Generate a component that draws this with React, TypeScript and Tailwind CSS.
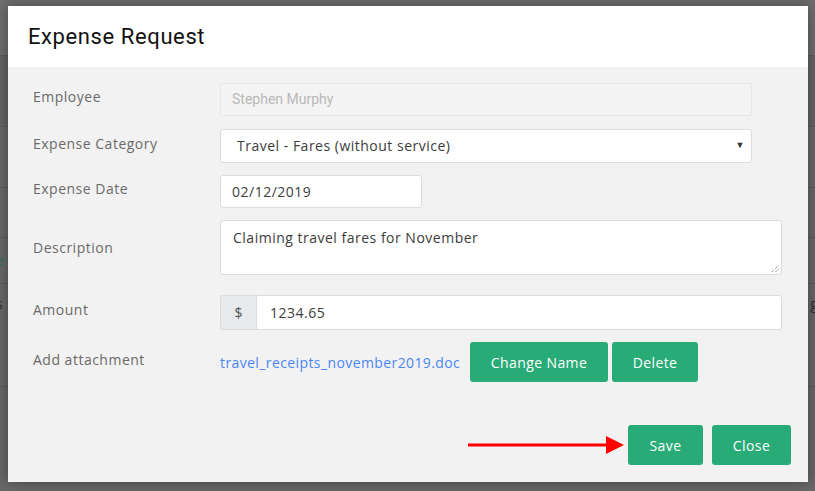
import React from 'react';

const label = "w-[187px] shrink-0 text-[14px] tracking-[0.5px] text-[#6a6a6a] font-['Open_Sans',sans-serif]";
const box = "border border-[#dcdcdc] rounded-[3px] bg-white flex items-center text-[14px] tracking-[0.5px] text-[#3c3c3c] font-['Open_Sans',sans-serif]";
const greenBtn = "h-[40px] rounded-[3px] bg-[#29ab77] text-white text-[14px] tracking-[0.4px] font-['Open_Sans',sans-serif] flex items-center justify-center";

const Backdrop = () => (
    <div className="flex flex-col h-full text-[14px] leading-[20px] font-['Open_Sans',sans-serif]">
        <div className="h-[56px] bg-[#6d6d6d] border-b border-[#5c5c5c]" />
        <div className="h-[71px] bg-[#646464] border-b border-[#5c5c5c]" />
        <div className="h-[61px] bg-[#676767] border-b border-[#5a5a5a]" />
        <div className="h-[50px] bg-[#676767] border-b border-[#5a5a5a]" />
        <div className="h-[46px] bg-[#676767] border-b border-[#5a5a5a] flex items-center">
            <span className="-ml-[4px] text-[#1f6f52]">e</span>
        </div>
        <div className="h-[103px] bg-[#676767] border-b border-[#5a5a5a] flex items-start justify-between pt-[10px] text-[#2a2a2a]">
            <span className="-ml-[4px]">s</span>
            <span className="-mr-[3px]">g</span>
        </div>
        <div className="flex-1 bg-[#676767]" />
    </div>
);

const Arrow = () => (
    <svg width="157" height="20" viewBox="0 0 157 20" className="mr-[3px]">
        <line x1="0" y1="10" x2="142" y2="10" stroke="#ff0000" strokeWidth="3" />
        <polygon points="138,1 156,10 138,19" fill="#ff0000" />
    </svg>
);

const App = () => {
    return (
        <div className="relative w-[815px] h-[491px] overflow-hidden bg-[#666]">
            <Backdrop />
            <div className="absolute left-[8px] top-[6px] w-[800px] h-[476px] flex flex-col shadow-[0_0_12px_rgba(0,0,0,0.35)]">
                <div className="h-[61px] shrink-0 bg-white flex items-center px-[20px]">
                    <h1 className="text-[22px] text-[#111] font-['Roboto',sans-serif] tracking-[0.6px]">Expense Request</h1>
                </div>
                <div className="flex-1 bg-[#f2f2f2] px-[25px] pt-[16px]">
                    <div className="flex items-center">
                        <div className={label + " -mt-[6px]"}>Employee</div>
                        <div className="w-[532px] h-[33px] border border-[#e6e6e6] rounded-[3px] bg-[#f4f4f4] flex items-center px-[11px] text-[14px] text-[#b8b8b8] font-['Roboto',sans-serif]">
                            Stephen Murphy
                        </div>
                    </div>
                    <div className="flex items-center mt-[13px]">
                        <div className={label + " -mt-[6px]"}>Expense Category</div>
                        <div className={box + " w-[532px] h-[34px] pl-[16px] pr-[6px] pb-[2px] justify-between"}>
                            <span>Travel - Fares (without service)</span>
                            <span className="text-[9px] text-[#333]">▼</span>
                        </div>
                    </div>
                    <div className="flex items-center mt-[12px]">
                        <div className={label + " -mt-[6px]"}>Expense Date</div>
                        <div className={box + " w-[202px] h-[33px] px-[11px]"}>02/12/2019</div>
                    </div>
                    <div className="flex items-center mt-[12px]">
                        <div className={label}>Description</div>
                        <div className={box + " relative w-[562px] h-[55px] px-[12px] items-start pt-[6px]"}>
                            Claiming travel fares for November
                            <svg width="8" height="8" viewBox="0 0 8 8" className="absolute right-[2px] bottom-[2px]">
                                <line x1="1" y1="8" x2="8" y2="1" stroke="#555" strokeWidth="0.8" strokeDasharray="1 1" />
                                <line x1="4.5" y1="8" x2="8" y2="4.5" stroke="#555" strokeWidth="0.8" strokeDasharray="1 1" />
                            </svg>
                        </div>
                    </div>
                    <div className="flex items-center mt-[20px]">
                        <div className={label + " -mt-[6px]"}>Amount</div>
                        <div className="flex">
                            <div className="w-[36px] h-[35px] bg-[#e8ebee] border border-[#dcdcdc] border-r-0 rounded-l-[3px] flex items-center justify-center text-[14px] text-[#555] font-['Open_Sans',sans-serif]">$</div>
                            <div className={box + " w-[526px] h-[35px] px-[13px] rounded-l-none"}>1234.65</div>
                        </div>
                    </div>
                    <div className="flex items-center mt-[12px]">
                        <div className={label + " -mt-[6px]"}>Add attachment</div>
                        <span className="w-[250px] shrink-0 text-[14px] tracking-[0.4px] text-[#4a86f5] font-['Open_Sans',sans-serif]">travel_receipts_november2019.doc</span>
                        <div className={greenBtn + " w-[138px]"}>Change Name</div>
                        <div className={greenBtn + " w-[86px] ml-[4px]"}>Delete</div>
                    </div>
                    <div className="flex items-center justify-end mt-[43px] -mr-[8px]">
                        <Arrow />
                        <div className={greenBtn + " w-[75px]"}>Save</div>
                        <div className={greenBtn + " w-[79px] ml-[9px]"}>Close</div>
                    </div>
                </div>
            </div>
        </div>
    );
};

export default App;
